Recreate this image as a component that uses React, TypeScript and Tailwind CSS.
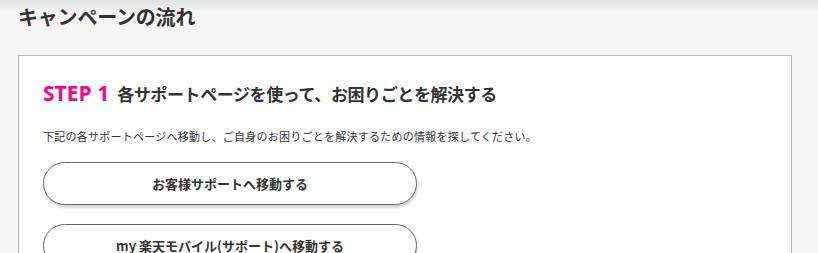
import React from "react";

const jp = { fontFamily: '"Noto Sans CJK JP", "Noto Sans", sans-serif' };

export default function App() {
  return (
    <div className="relative w-[818px] h-[253px] overflow-hidden bg-[#f6f6f6] text-[#333]" style={jp}>
      <div className="absolute left-0 right-0 top-0 h-[12px] bg-gradient-to-b from-[#dfe0e0] to-[#f6f6f6]" />
      <div className="relative pl-[18px] pr-[26px] pt-[2px]">
        <h1 className="text-[20px] leading-[30px] font-bold tracking-[-0.2px]">キャンペーンの流れ</h1>
        <div className="mt-[23px] bg-white border border-[#bbb] px-[24px] pt-[22px] h-[300px]">
          <h2 className="text-[17px] leading-[30px] font-bold flex items-baseline">
            <span className="text-[#ff008c] text-[21px] mr-[8px]" style={{ fontFamily: '"Open Sans", "Noto Sans", sans-serif' }}>STEP 1</span>
            <span className="tracking-[-0.4px]">各サポートページを使って、お困りごとを解決する</span>
          </h2>
          <p className="mt-[19px] text-[11px] leading-[16px] tracking-[0.25px]">下記の各サポートページへ移動し、ご自身のお困りごとを解決するための情報を探してください。</p>
          <div className="mt-[18px] flex flex-col gap-[19px]">
            <button className="w-[374px] h-[43px] rounded-full border border-[#666] bg-white shadow-[1px_3px_2px_rgba(0,0,0,0.15)] text-[13px] font-bold text-[#333]">お客様サポートへ移動する</button>
            <button className="w-[374px] h-[43px] rounded-full border border-[#666] bg-white shadow-[1px_3px_2px_rgba(0,0,0,0.15)] text-[13px] font-bold text-[#333]">my 楽天モバイル(サポート)へ移動する</button>
          </div>
        </div>
      </div>
    </div>
  );
}
